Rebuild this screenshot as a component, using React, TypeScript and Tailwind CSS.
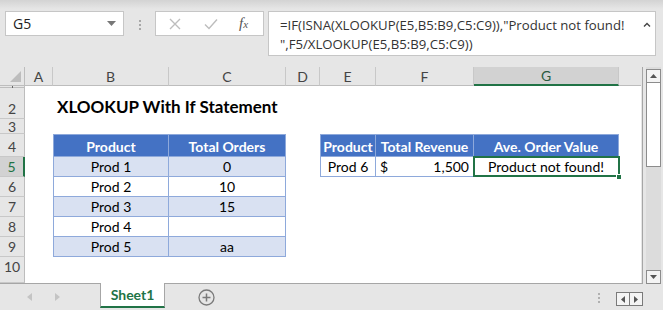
import React from 'react';

const CELL = "font-['Lato',sans-serif] text-[14px] text-black";
const HEAD = 'bg-[#4472c4] text-white font-bold';
const BAND = 'bg-[#d9e1f2]';
const BD = 'border-[#8ea9db]';

const RowHead = ({ n, active, top, h = 19 }: { n: string; active?: boolean; top?: boolean; h?: number }) => (
  <div
    className={`flex ${top ? 'items-start' : 'items-end'} justify-center overflow-hidden border-b border-[#c8c8c8] ${
      active ? 'bg-[#d2d2d2] border-r-2 border-r-[#217346] text-[#217346]' : 'bg-[#e6e6e6] border-r border-r-[#bdbdbd] text-[#444]'
    } font-['Lato',sans-serif] text-[14px]`}
  >
    <span className={`${h === 14 ? 'h-[14px] leading-[16px]' : 'h-[19px] leading-[19px]'} shrink-0`}>{n}</span>
  </div>
);

const ColHead = ({ l, active }: { l: string; active?: boolean }) => (
  <div
    className={`flex items-center justify-center font-['Lato',sans-serif] text-[14px] border-r border-r-[#c8c8c8] ${
      active ? 'bg-[#d2d2d2] border-b-2 border-b-[#217346] text-[#2a5a3f]' : 'bg-[#e6e6e6] border-b border-b-[#bdbdbd] text-[#444]'
    }`}
  >
    {l}
  </div>
);

const Cell = ({ children, bg = 'bg-white', className = '' }: { children?: React.ReactNode; bg?: string; className?: string }) => (
  <div className={`flex items-end ${bg} ${CELL} ${className}`}>
    <span className="h-[19px] leading-[19px] whitespace-nowrap">{children}</span>
  </div>
);

const Blank = () => <div className="bg-white" />;

const orders = [
  ['Prod 1', '0'],
  ['Prod 2', '10'],
  ['Prod 3', '15'],
  ['Prod 4', ''],
  ['Prod 5', 'aa'],
];

export default function App() {
  return (
    <div className="w-[663px] h-[310px] bg-[#e6e6e6] overflow-hidden select-none">
      {/* formula bar */}
      <div className="h-[67px] flex items-start pt-[11px] bg-[linear-gradient(#d3d3d3,#e6e6e6_9px)]">
        <div className="ml-[5px] w-[119px] h-[25px] bg-white border border-[#c6c6c6] flex items-center justify-between pl-[7px] pr-[7px]">
          <span className="font-['Open_Sans',sans-serif] text-[14px] text-[#222]">G5</span>
          <svg width="9" height="5" viewBox="0 0 9 5">
            <path d="M0 0h9L4.5 5z" fill="#777" />
          </svg>
        </div>
        <div className="w-[31px] flex flex-col items-center gap-[2px] pt-[9px]">
          <span className="w-[2px] h-[2px] bg-[#a8a8a8]" />
          <span className="w-[2px] h-[2px] bg-[#a8a8a8]" />
          <span className="w-[2px] h-[2px] bg-[#a8a8a8]" />
        </div>
        <div className="w-[109px] h-[25px] bg-white border border-[#c6c6c6] flex items-center">
          <svg width="12" height="12" viewBox="0 0 12 12" className="ml-[13px]">
            <path d="M1 1l10 10M11 1L1 11" stroke="#bdbdbd" strokeWidth="1.4" />
          </svg>
          <svg width="14" height="12" viewBox="0 0 14 12" className="ml-[23px]">
            <path d="M1 6.5l4 4L13 1.5" stroke="#bdbdbd" strokeWidth="1.4" fill="none" />
          </svg>
          <span className="ml-[21px] font-['Liberation_Serif',serif] italic text-[15px] text-[#555] leading-none">
            f<span className="text-[11px]">x</span>
          </span>
        </div>
        <div className="ml-[4px] w-[388px] h-[45px] bg-white border border-[#c6c6c6] relative pl-[11px] pt-[4px] font-['Open_Sans',sans-serif] text-[13.2px] text-[#333] leading-[19px] whitespace-nowrap">
          <div>=IF(ISNA(XLOOKUP(E5,B5:B9,C5:C9)),"Product not found!</div>
          <div>",F5/XLOOKUP(E5,B5:B9,C5:C9))</div>
          <svg width="8" height="5" viewBox="0 0 8 5" className="absolute right-[4px] top-[10px]">
            <path d="M1 4.5L4 1.5L7 4.5" stroke="#444" strokeWidth="1.4" fill="none" />
          </svg>
        </div>
      </div>

      {/* grid + scrollbar */}
      <div className="flex">
        <div className="w-[643px] border-r border-b border-[#a6a6a6] grid grid-cols-[25px_28px_116px_117px_34px_56px_98px_145px_22px] grid-rows-[19px_2px_31px_15px_23px_repeat(5,20px)_26px]">
          {/* header row */}
          <div className="bg-[#e6e6e6] border-r border-b border-[#bdbdbd] flex items-end justify-end p-[3px]">
            <svg width="11" height="11" viewBox="0 0 11 11">
              <path d="M11 0V11H0z" fill="#bdbdbd" />
            </svg>
          </div>
          {['A', 'B', 'C', 'D', 'E', 'F'].map((l) => (
            <ColHead key={l} l={l} />
          ))}
          <ColHead l="G" active />
          <div className="bg-[#e6e6e6] border-b border-b-[#bdbdbd]" />

          {/* row 1 */}
          <div className="bg-[#e6e6e6] border-r border-b border-[#bdbdbd] flex justify-center">
            <span className="w-[1px] h-[2px] bg-[#666]" />
          </div>
          {Array.from({ length: 8 }).map((_, i) => (
            <Blank key={i} />
          ))}

          {/* row 2 */}
          <RowHead n="2" />
          <Blank />
          <div className="col-span-2 flex items-end bg-white pl-[4px] pb-[2px]">
            <span className="font-['Lato',sans-serif] font-bold text-[17px] text-black leading-[20px] whitespace-nowrap">
              XLOOKUP With If Statement
            </span>
          </div>
          {Array.from({ length: 5 }).map((_, i) => (
            <Blank key={i} />
          ))}

          {/* row 3 */}
          <RowHead n="3" h={14} />
          {Array.from({ length: 8 }).map((_, i) => (
            <Blank key={i} />
          ))}

          {/* row 4 */}
          <RowHead n="4" />
          <Blank />
          <Cell bg={HEAD} className={`justify-center border-l border-r border-t border-b ${BD}`}>Product</Cell>
          <Cell bg={HEAD} className={`justify-center border-r border-t border-b ${BD}`}>Total Orders</Cell>
          <Blank />
          <Cell bg={HEAD} className={`justify-center border-l border-r border-t border-b ${BD}`}>Product</Cell>
          <Cell bg={HEAD} className={`justify-center border-r border-t border-b ${BD}`}>Total Revenue</Cell>
          <Cell bg={HEAD} className={`justify-center border-r border-t border-b ${BD}`}>Ave. Order Value</Cell>
          <Blank />

          {/* rows 5-9 */}
          {orders.map(([p, o], i) => {
            const bg = i % 2 === 0 ? BAND : 'bg-white';
            return (
              <React.Fragment key={p}>
                <RowHead n={String(i + 5)} active={i === 0} />
                <Blank />
                <Cell bg={bg} className={`justify-center border-l border-r border-b ${BD}`}>{p}</Cell>
                <Cell bg={bg} className={`justify-center border-r border-b ${BD}`}>{o}</Cell>
                <Blank />
                {i === 0 ? (
                  <>
                    <Cell className={`justify-center border-l border-r border-b ${BD}`}>Prod 6</Cell>
                    <div className={`flex items-end justify-between bg-white border-r border-b ${BD} px-[4px] ${CELL}`}>
                      <span className="h-[19px] leading-[19px]">$</span>
                      <span className="h-[19px] leading-[19px]">1,500</span>
                    </div>
                    <div className={`relative flex items-end justify-center bg-white border-r border-b ${BD} ${CELL}`}>
                      <span className="h-[19px] leading-[19px] whitespace-nowrap">Product not found!</span>
                      <div className="absolute -left-[1px] -top-[1px] -right-[2px] -bottom-[1px] border-2 border-[#217346]" />
                      <div className="absolute -right-[4px] -bottom-[4px] w-[6px] h-[6px] bg-[#217346] border border-white" />
                    </div>
                  </>
                ) : (
                  <>
                    <Blank />
                    <Blank />
                    <Blank />
                  </>
                )}
                <Blank />
              </React.Fragment>
            );
          })}

          {/* row 10 */}
          <RowHead n="10" top />
          {Array.from({ length: 8 }).map((_, i) => (
            <Blank key={i} />
          ))}
        </div>

        {/* vertical scrollbar */}
        <div className="ml-[3px] w-[15px] h-[217px] bg-[#dcdcdc] flex flex-col">
          <div className="mt-[2px] h-[14px] bg-[#f4f4f4] border border-[#8c8c8c] flex items-center justify-center">
            <svg width="7" height="4" viewBox="0 0 7 4">
              <path d="M0 4L3.5 0L7 4z" fill="#555" />
            </svg>
          </div>
          <div className="h-[84px] bg-white border border-t-0 border-[#8c8c8c]" />
          <div className="flex-1" />
          <div className="h-[14px] bg-[#f4f4f4] border border-[#8c8c8c] flex items-center justify-center">
            <svg width="7" height="4" viewBox="0 0 7 4">
              <path d="M0 0L3.5 4L7 0z" fill="#555" />
            </svg>
          </div>
        </div>
      </div>

      {/* sheet tabs */}
      <div className="h-[26px] flex items-start">
        <div className="w-[100px] h-[26px] flex items-center">
          <svg width="5" height="8" viewBox="0 0 5 8" className="ml-[27px]">
            <path d="M5 0V8L0 4z" fill="#c4c4c4" />
          </svg>
          <svg width="5" height="8" viewBox="0 0 5 8" className="ml-[23px]">
            <path d="M0 0V8L5 4z" fill="#c4c4c4" />
          </svg>
        </div>
        <div className="-mt-[1px] w-[65px] h-[25px] bg-white border-l border-r border-[#a6a6a6] border-b-[2px] border-b-[#217346] flex items-center justify-center">
          <span className="font-['Lato',sans-serif] font-bold text-[14px] text-[#217346]">Sheet1</span>
        </div>
        <div className="ml-[33px] h-[26px] flex items-center">
          <svg width="17" height="17" viewBox="0 0 17 17">
            <circle cx="8.5" cy="8.5" r="7.5" stroke="#7a7a7a" strokeWidth="1.3" fill="none" />
            <path d="M8.5 4.5v8M4.5 8.5h8" stroke="#7a7a7a" strokeWidth="1.5" />
          </svg>
        </div>
        <div className="flex-1" />
        <div className="h-[26px] flex flex-col justify-center gap-[2px] mr-[16px] pt-[1px]">
          <span className="w-[2px] h-[2px] bg-[#b0b0b0]" />
          <span className="w-[2px] h-[2px] bg-[#b0b0b0]" />
          <span className="w-[2px] h-[2px] bg-[#b0b0b0]" />
        </div>
        <div className="mt-[8px] mr-[20px] w-[27px] h-[14px] border border-[#7a7a7a] flex bg-[#f4f4f4]">
          <div className="flex-1 flex items-center justify-center border-r border-[#7a7a7a]">
            <svg width="4" height="7" viewBox="0 0 4 7">
              <path d="M4 0V7L0 3.5z" fill="#555" />
            </svg>
          </div>
          <div className="flex-1 flex items-center justify-center">
            <svg width="4" height="7" viewBox="0 0 4 7">
              <path d="M0 0V7L4 3.5z" fill="#555" />
            </svg>
          </div>
        </div>
      </div>
    </div>
  );
}
